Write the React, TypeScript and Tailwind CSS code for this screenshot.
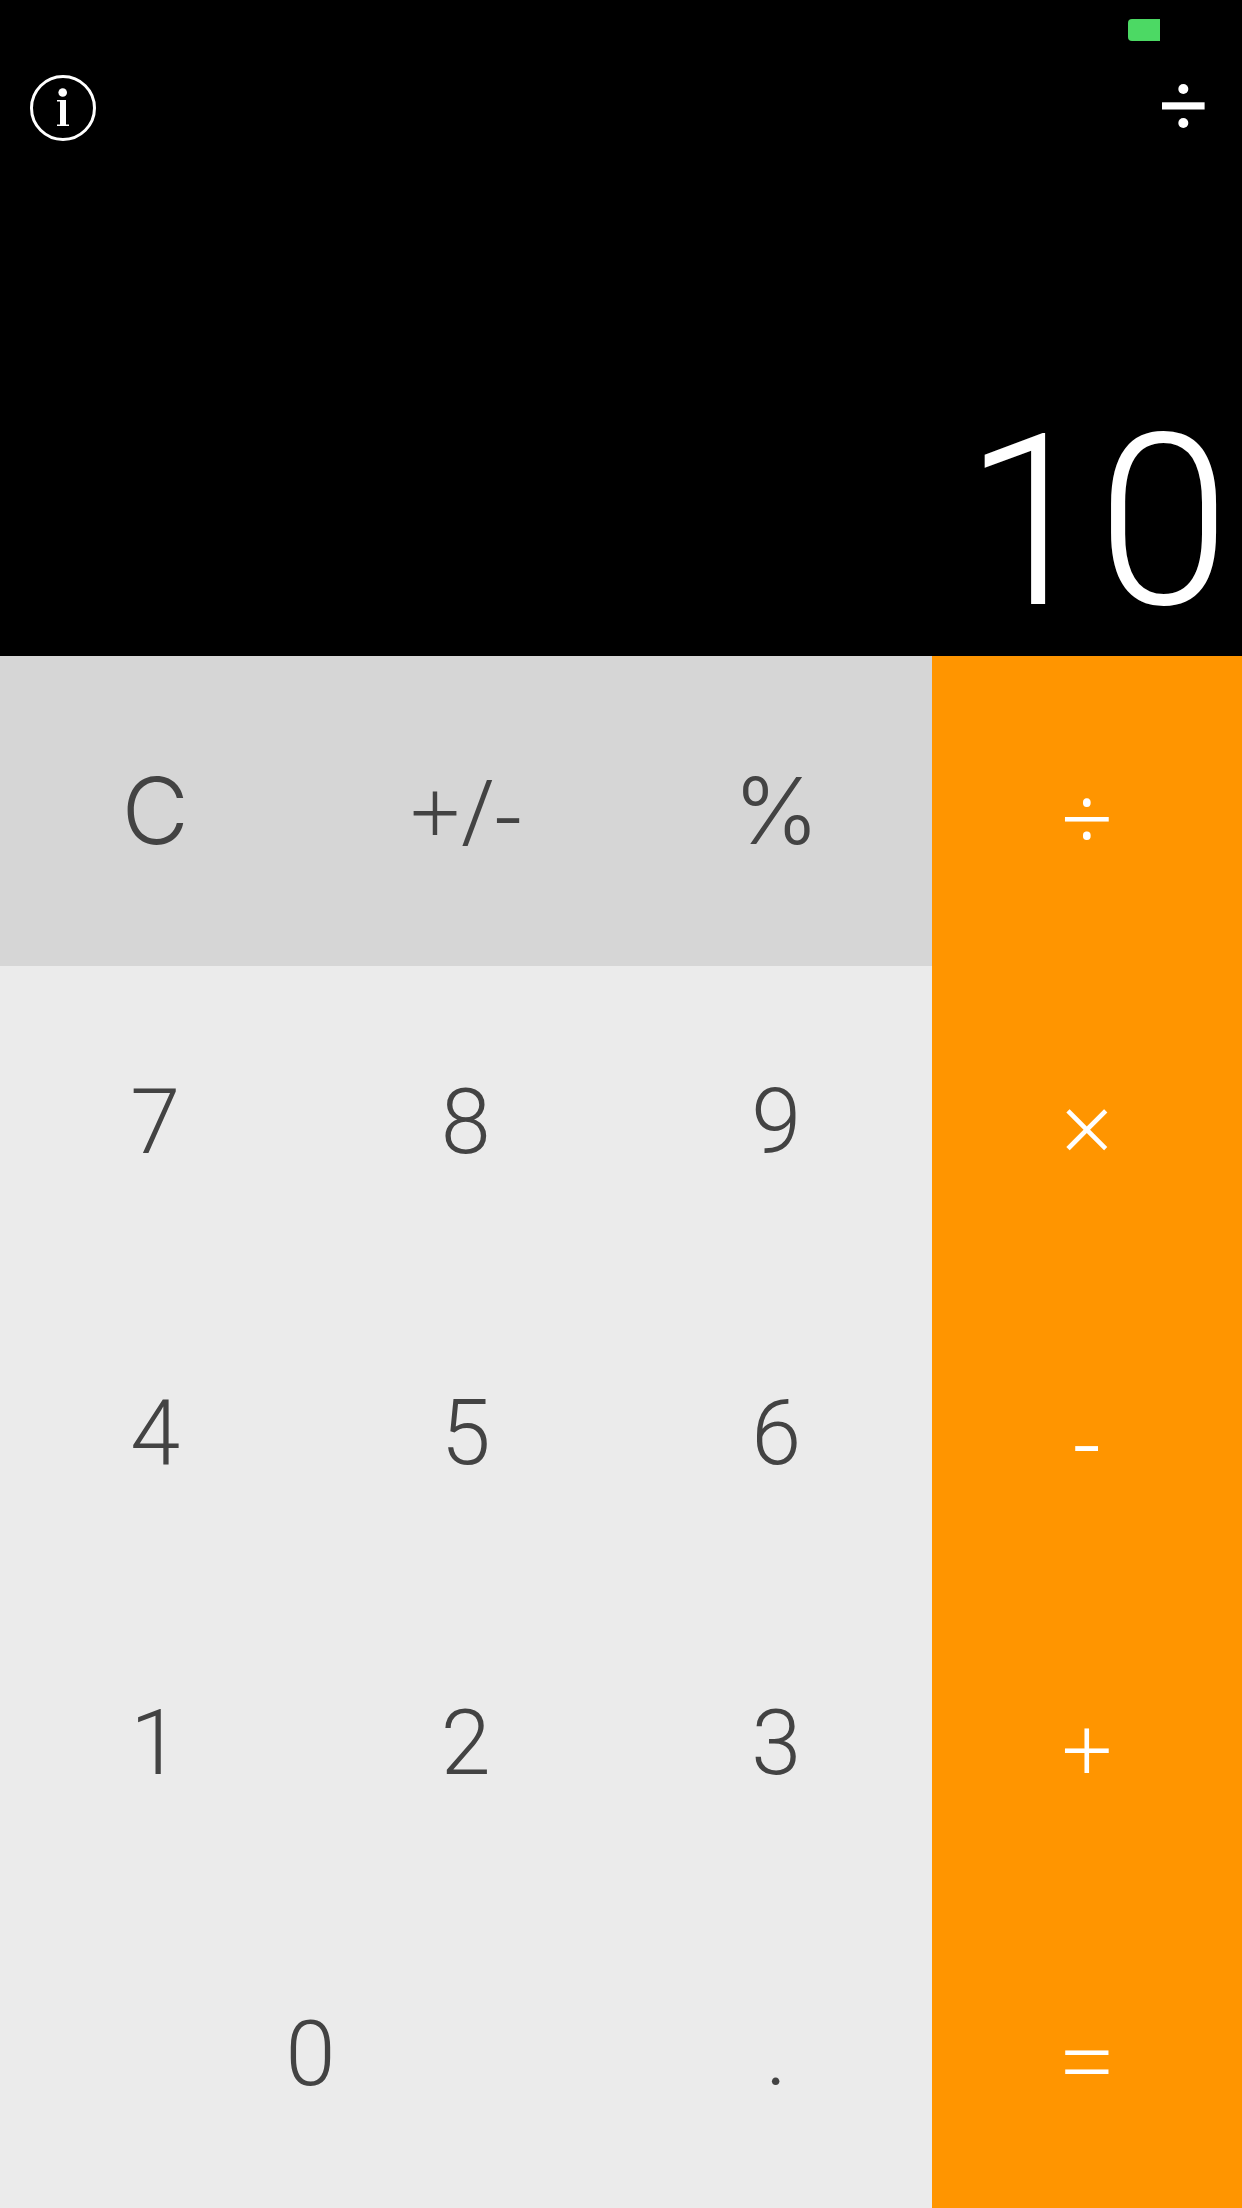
import { useState } from "react";

type Key = { label: string; name: string; className: string };

const UTILITY = "bg-[#d6d6d6] text-[#434343] aspect-square font-['Inter',sans-serif] text-[92px] font-[270]";
const SIGN = "bg-[#d6d6d6] text-[#434343] aspect-square font-['Noto_Sans',sans-serif] text-[92px] font-light";
const DIGIT = "bg-[#ebebeb] text-[#434343] aspect-square font-['Roboto',sans-serif] text-[90px] font-light pt-1";
const WIDE = "bg-[#ebebeb] text-[#434343] col-span-2 font-['Roboto',sans-serif] text-[90px] font-light pt-1";
const OPERATOR = "bg-[#ff9500] text-white aspect-square font-['Noto_Sans',sans-serif] text-[94px] font-light pt-3";

const keys: Key[] = [
  { label: "C", name: "Clear", className: UTILITY },
  { label: "+/-", name: "Change sign", className: SIGN },
  { label: "%", name: "Percent", className: UTILITY },
  { label: "÷", name: "Divide", className: OPERATOR },
  { label: "7", name: "7", className: DIGIT },
  { label: "8", name: "8", className: DIGIT },
  { label: "9", name: "9", className: DIGIT },
  { label: "×", name: "Multiply", className: OPERATOR },
  { label: "4", name: "4", className: DIGIT },
  { label: "5", name: "5", className: DIGIT },
  { label: "6", name: "6", className: DIGIT },
  { label: "-", name: "Subtract", className: OPERATOR },
  { label: "1", name: "1", className: DIGIT },
  { label: "2", name: "2", className: DIGIT },
  { label: "3", name: "3", className: DIGIT },
  { label: "+", name: "Add", className: OPERATOR },
  { label: "0", name: "0", className: WIDE },
  { label: ".", name: "Decimal point", className: DIGIT },
  { label: "=", name: "Equals", className: OPERATOR },
];

function InfoIcon() {
  return (
    <svg className="size-[66px]" viewBox="0 0 66 66" aria-hidden="true">
      <circle cx="33" cy="33" r="31.5" fill="none" stroke="white" strokeWidth="3" />
      <circle cx="32.7" cy="17.5" r="4.3" fill="white" />
      <path d="M27 25h9v24.5h3V51H27v-1.5h3v-23h-3z" fill="white" />
    </svg>
  );
}

function DivideIcon() {
  return (
    <svg className="h-[44px] w-[43px]" viewBox="0 0 43 44" role="img" aria-label="Pending operation: divide">
      <circle cx="21.3" cy="5" r="5" fill="white" />
      <rect x="0" y="18.3" width="42.6" height="7.2" fill="white" />
      <circle cx="21.3" cy="39" r="5" fill="white" />
    </svg>
  );
}

export default function App() {
  const [display, setDisplay] = useState("10");

  const press = (label: string) => {
    if (label === "C") setDisplay("0");
    else if (/^[0-9.]$/.test(label)) setDisplay((d) => (d === "0" && label !== "." ? label : d + label));
  };

  return (
    <div className="flex min-h-screen flex-col bg-black">
      <header className="flex flex-1 flex-col text-white">
        <div className="flex h-[75px] justify-end pt-[19px] pr-[82px]">
          <div className="h-[22px] w-8 rounded-l bg-[#4cd964]" />
        </div>
        <div className="flex items-start justify-between pr-[37px] pl-[30px]">
          <button type="button" aria-label="About" className="cursor-pointer">
            <InfoIcon />
          </button>
          <div className="pt-[9px]">
            <DivideIcon />
          </div>
        </div>
        <output className="mt-auto block pr-3 pb-1 text-right font-['Roboto',sans-serif] text-[240px] leading-[260px] font-light">
          {display}
        </output>
      </header>
      <main className="grid grid-cols-4">
        {keys.map((key) => (
          <button
            key={key.name}
            type="button"
            aria-label={key.name}
            onClick={() => press(key.label)}
            className={`flex cursor-pointer items-center justify-center leading-none ${key.className}`}
          >
            {key.label}
          </button>
        ))}
      </main>
    </div>
  );
}
